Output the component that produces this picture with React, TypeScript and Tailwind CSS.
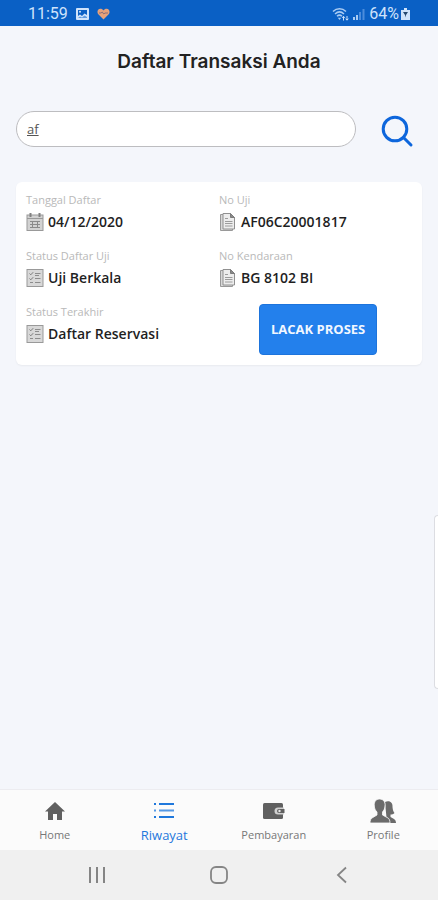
import { useState } from "react";
import type { ReactNode } from "react";

type FieldProps = {
  label: string;
  value: string;
  icon: ReactNode;
};

type TabProps = {
  label: string;
  icon: ReactNode;
  active?: boolean;
};

function CalendarIcon() {
  return (
    <svg width="18" height="20" viewBox="0 0 18 20" fill="none" aria-hidden="true">
      <rect x="1" y="3" width="16" height="15.5" fill="#d2d2d2" stroke="#999" />
      <path d="M1 6.5h16" stroke="#999" />
      <path d="M4.500 1v4M13.500 1v4" stroke="#808080" strokeWidth="2" />
      <path d="M4 9.500h10M4 12.500h10M4 15.500h10M6.500 9v7M11.500 9v7" stroke="#8a8a8a" />
    </svg>
  );
}

function StatusIcon() {
  return (
    <svg width="18" height="20" viewBox="0 0 18 20" fill="none" aria-hidden="true">
      <rect x="1" y="1.5" width="16" height="17" fill="#d8d8d8" stroke="#999" />
      <path d="M3.500 5.500l1.300 1.300 2.400-2.600M3.500 10.500l1.300 1.300 2.400-2.600" stroke="#7c7c7c" />
      <path d="M9 5.500h5.500M9 7.500h4M9 10.500h5.500M4 14.500h3M9 14.500h5.500" stroke="#8c8c8c" />
    </svg>
  );
}

function DocumentIcon() {
  return (
    <svg width="18" height="20" viewBox="0 0 18 20" fill="none" aria-hidden="true">
      <path d="M4 2.500H1.500v16h12V17" fill="#d8d8d8" stroke="#999" />
      <path d="M4 1.500h7.500l4 4V17H4z" fill="#ededed" stroke="#909090" />
      <path d="M11.500 1.500v4h4z" fill="#8a8a8a" stroke="#7c7c7c" />
      <path d="M6 6.500h3M6 9.500h7.500M6 11.500h7.500M6 14h7.500" stroke="#9c9c9c" />
    </svg>
  );
}

function Field({ label, value, icon }: FieldProps) {
  return (
    <div>
      <dt className="text-[11px] leading-4 text-[#b9b9b9]">{label}</dt>
      <dd className="mt-0.5 flex h-6 items-center gap-1 text-sm font-semibold text-[#1f1f1f]">
        {icon}
        {value}
      </dd>
    </div>
  );
}

function Tab({ label, icon, active }: TabProps) {
  return (
    <a
      href="#"
      aria-current={active ? "page" : undefined}
      className={
        active
          ? "flex flex-1 flex-col items-center text-[13px] text-[#1f78dc]"
          : "flex flex-1 flex-col items-center text-[11px] text-[#777777]"
      }
    >
      <span className="flex h-7 items-center">{icon}</span>
      <span className="leading-5">{label}</span>
    </a>
  );
}

function StatusBar() {
  return (
    <div className="flex h-[26px] items-center justify-between bg-[#0a60c5] pt-0.5 pr-7 pl-7 font-['Roboto',sans-serif] text-base text-[#cfe3fb]">
      <div className="flex items-center gap-2">
        <span>11:59</span>
        <svg width="13" height="12" viewBox="0 0 13 12" aria-hidden="true">
          <rect width="13" height="12" rx="1" fill="#cfe3fb" />
          <path d="M2 2h9v5L8.500 5.500 6 8 4 6.500 2 8z" fill="#0a60c5" />
          <circle cx="4" cy="3.800" r="1" fill="#cfe3fb" />
          <path d="M2 10l2-1.500 2 1 2.500-2L11 9v1z" fill="#5f9be0" />
        </svg>
        <svg width="13" height="12" viewBox="0 0 13 12" aria-hidden="true">
          <path
            d="M6.500 11.500L1.300 6.200C-.3 4.500.4 1 3.400.8c1.300 0 2.300.6 3.100 1.700C7.300 1.400 8.300.8 9.600.8c3 .2 3.700 3.700 2.100 5.400z"
            fill="#e8a27a"
          />
          <path d="M2 5h2l1.200-1 1.600 2L8 5h3" fill="none" stroke="#8c6f78" />
        </svg>
      </div>
      <div className="flex items-center gap-1">
        <svg width="17" height="15" viewBox="0 0 17 15" fill="none" aria-hidden="true">
          <path d="M1 4.500c3.800-3.600 9.200-3.600 13 0M3 7c2.800-2.600 6.200-2.600 9 0M5 9.300c1.600-1.500 3.400-1.500 5 0" stroke="#a9cbf3" strokeWidth="1.500" />
          <path d="M7.500 13L5.800 10.800h3.400z" fill="#a9cbf3" />
          <path d="M11.500 13.500v-4M10.200 10.800l1.300-1.500 1.300 1.500M15 9v4M13.700 11.700L15 13.200l1.300-1.500" stroke="#cfe3fb" />
        </svg>
        <svg width="12" height="12" viewBox="0 0 12 12" aria-hidden="true">
          <path d="M0 9h2v3H0zM3 7h2v5H3z" fill="#a9cbf3" />
          <path d="M6 4h2v8H6zM9.500 1h2v11h-2z" fill="#4b8cdc" />
        </svg>
        <div className="flex items-center gap-0.5">
          <span>64%</span>
          <svg width="9" height="12" viewBox="0 0 9 12" aria-hidden="true">
            <path d="M3 0h3v2h3v10H0V2h3z" fill="#cfe3fb" />
            <path d="M2 4h5L5 7v2.500L4 7z" fill="#24486f" />
          </svg>
        </div>
      </div>
    </div>
  );
}

function SystemNav() {
  return (
    <div className="flex h-[50px] items-center justify-around bg-[#f0f0f0] px-9 text-[#858585]">
      <button type="button" aria-label="Recent apps">
        <svg width="18" height="18" viewBox="0 0 18 18" stroke="currentColor" strokeWidth="2" aria-hidden="true">
          <path d="M2 1v16M9 1v16M16 1v16" />
        </svg>
      </button>
      <button type="button" aria-label="Home screen">
        <svg width="18" height="18" viewBox="0 0 18 18" fill="none" stroke="currentColor" strokeWidth="1.800" aria-hidden="true">
          <rect x="1" y="1" width="16" height="16" rx="5" />
        </svg>
      </button>
      <button type="button" aria-label="Back">
        <svg width="18" height="18" viewBox="0 0 18 18" fill="none" stroke="currentColor" strokeWidth="1.800" aria-hidden="true">
          <path d="M14 1.500L6 9l8 7.500" />
        </svg>
      </button>
    </div>
  );
}

export default function App() {
  const [query, setQuery] = useState("af");

  return (
    <div className="relative flex min-h-screen flex-col bg-[#f4f6fb] font-['Open_Sans',sans-serif]">
      <StatusBar />

      <main className="flex-1 px-4">
        <h1 className="mt-5 text-center font-['Inter',sans-serif] text-[19px] leading-8 font-semibold text-[#222222]">
          Daftar Transaksi Anda
        </h1>

        <form className="mt-8 flex items-center gap-6 pr-2" onSubmit={(e) => e.preventDefault()}>
          <input
            value={query}
            onChange={(e) => setQuery(e.target.value)}
            aria-label="Cari transaksi"
            className="h-9 min-w-0 flex-1 rounded-full border border-[#bdbdc0] bg-white px-2.5 text-[13px] text-[#555555] underline outline-none"
          />
          <button type="submit" aria-label="Cari" className="pt-1 text-[#0d66dc]">
            <svg width="34" height="34" viewBox="0 0 34 34" fill="none" stroke="currentColor" strokeWidth="3" aria-hidden="true">
              <circle cx="15" cy="15" r="11.800" />
              <path d="M23.500 23.500l7.500 7.500" strokeLinecap="round" />
            </svg>
          </button>
        </form>

        <section className="mt-[34px] rounded-md bg-white p-2.5 shadow-xs">
          <dl className="grid grid-cols-2 gap-y-3.5">
            <Field label="Tanggal Daftar" value="04/12/2020" icon={<CalendarIcon />} />
            <Field label="No Uji" value="AF06C20001817" icon={<DocumentIcon />} />
            <Field label="Status Daftar Uji" value="Uji Berkala" icon={<StatusIcon />} />
            <Field label="No Kendaraan" value="BG 8102 BI" icon={<DocumentIcon />} />
            <Field label="Status Terakhir" value="Daftar Reservasi" icon={<StatusIcon />} />
            <div className="pl-10">
              <button
                type="button"
                className="h-[51px] rounded-sm border border-[#1d74dc] bg-[#2380ec] px-[11px] text-[13px] font-bold text-[#f1f7ff]"
              >
                LACAK PROSES
              </button>
            </div>
          </dl>
        </section>
      </main>

      <div className="absolute top-[515px] right-0 h-[174px] w-1 rounded-l-md border border-r-0 border-[#dcdde2] bg-white" />

      <nav className="flex h-[61px] border-t border-[#ececf0] bg-[#fbfbfb] pt-[7px]">
        <Tab
          label="Home"
          icon={
            <svg width="20" height="18" viewBox="0 0 20 18" fill="#606060" aria-hidden="true">
              <path d="M10 0l10 9.500h-3V18h-5v-6H8v6H3V9.500H0z" />
            </svg>
          }
        />
        <Tab
          label="Riwayat"
          active
          icon={
            <svg width="20" height="16" viewBox="0 0 20 16" fill="#1f78dc" aria-hidden="true">
              <path d="M0 0h2v2H0zM5 0h15v2H5zM0 13h2v2H0zM5 13h15v2H5z" />
              <path d="M0 6.500h2v2H0zM5 6.500h15v2H5z" opacity=".75" />
            </svg>
          }
        />
        <Tab
          label="Pembayaran"
          icon={
            <svg width="22" height="16" viewBox="0 0 22 16" aria-hidden="true">
              <rect width="20" height="16" rx="1.500" fill="#606060" />
              <path d="M21 4.500h-6a3.500 3.500 0 000 7h6z" fill="#d0d0d0" />
              <path d="M21.500 6H16a2 2 0 000 4h5.500z" fill="#606060" />
              <circle cx="16.500" cy="8" r="1.200" fill="#e8e8e8" />
            </svg>
          }
        />
        <Tab
          label="Profile"
          icon={
            <svg width="26" height="24" viewBox="0 0 26 24" fill="#6b6b6b" aria-hidden="true">
              <path d="M15 3c5-2 8 1 7.500 5 .2 3 1 5 2 6-1 1.200-2.500 1.500-4 1.500V18l3.500 2c1.200.7 2 2 2 4h-9z" />
              <path
                d="M9.500 0c4 0 6 3 5.500 7-.3 3-1.200 4.500-2.500 6v3l5.500 3c1.200.7 2 2.500 2 5H0c0-2.500.8-4.300 2-5l5-3v-3C5.500 11.500 4.500 10 4.300 7 4 3 5.500 0 9.500 0z"
                stroke="#fbfbfb"
                strokeWidth=".8"
              />
            </svg>
          }
        />
      </nav>

      <SystemNav />
    </div>
  );
}
